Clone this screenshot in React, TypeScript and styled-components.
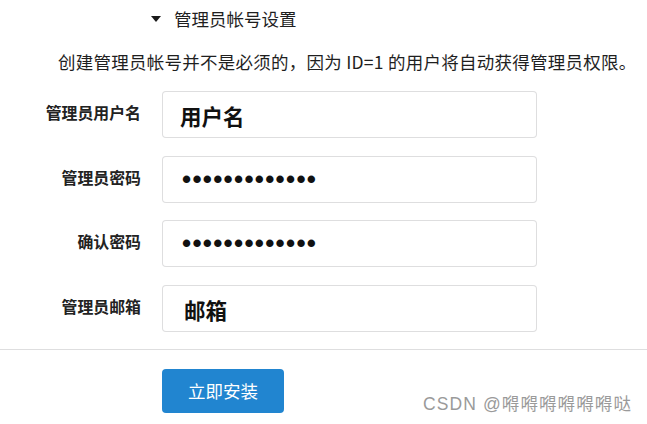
import React from "react";
import styled, { createGlobalStyle } from "styled-components";

const Global = createGlobalStyle`
  html, body {
    margin: 0;
    padding: 0;
    background: #ffffff;
  }
  body {
    font-family: "Noto Sans CJK SC", "Noto Sans", sans-serif;
    color: rgba(0, 0, 0, 0.87);
  }
`;

const Page = styled.div`
  position: relative;
  width: 647px;
  height: 424px;
  overflow: hidden;
  display: flex;
  flex-direction: column;
`;

const Header = styled.div`
  height: 36px;
  display: flex;
  align-items: center;
  padding-left: 151px;
  gap: 13px;
  font-size: 17.5px;
  color: #1f1f1f;
`;

const Caret = styled.span`
  width: 0;
  height: 0;
  border-left: 5px solid transparent;
  border-right: 5px solid transparent;
  border-top: 6px solid #1a1a1a;
  margin-top: 1px;
`;

const Description = styled.p`
  margin: 14px 0 0 58px;
  font-size: 17.5px;
  letter-spacing: 0.25px;
  line-height: 24px;
  color: #1f1f1f;
  white-space: nowrap;
`;

const Form = styled.div`
  margin-top: 17px;
  display: grid;
  grid-template-columns: 141px 375px;
  column-gap: 21px;
  row-gap: 17.67px;
`;

const Label = styled.label`
  display: flex;
  align-items: center;
  justify-content: flex-end;
  padding-bottom: 4px;
  font-size: 15.9px;
  font-weight: 700;
  color: #222;
  white-space: nowrap;
`;

const Field = styled.input<{ $secret?: boolean; $indent?: number }>`
  box-sizing: border-box;
  width: 375px;
  height: 47px;
  margin: 0;
  border: 1px solid rgba(34, 36, 38, 0.15);
  border-radius: 4px;
  padding: ${(p) => (p.$secret ? "0 0 0 19px" : `2px 0 0 ${p.$indent ?? 17}px`)};
  background: #fff;
  outline: none;
  font-family: ${(p) => (p.$secret ? '"Liberation Sans", sans-serif' : '"Noto Sans CJK SC", sans-serif')};
  font-size: ${(p) => (p.$secret ? "26px" : "21.5px")};
  font-weight: 700;
  letter-spacing: ${(p) => (p.$secret ? "1.3px" : "0")};
  color: #111;
`;

const Divider = styled.hr`
  margin: 17px 0 0 0;
  border: none;
  border-top: 1px solid rgba(34, 36, 38, 0.15);
  height: 0;
`;

const Footer = styled.div`
  padding: 19px 0 0 162px;
`;

const Button = styled.button`
  width: 122px;
  height: 44px;
  border: none;
  border-radius: 4px;
  background: #2185d0;
  color: #fff;
  font-family: "Noto Sans CJK SC", sans-serif;
  font-size: 17.5px;
  cursor: pointer;
  padding: 0;
`;

const Watermark = styled.div`
  position: absolute;
  right: 15px;
  bottom: 9px;
  font-family: "Liberation Sans", "Noto Sans CJK SC", sans-serif;
  font-size: 17.5px;
  letter-spacing: 1.1px;
  color: #9a9a9a;
  text-shadow: 0 0 1px #fff;
  white-space: nowrap;
`;

const DOTS = "•••••••••••••";

const rows = [
  { label: "管理员用户名", value: "用户名" },
  { label: "管理员密码", value: DOTS, secret: true },
  { label: "确认密码", value: DOTS, secret: true },
  { label: "管理员邮箱", value: "邮箱", indent: 21 },
];

export default function App() {
  return (
    <>
      <Global />
      <Page>
        <Header>
          <Caret />
          <span>管理员帐号设置</span>
        </Header>
        <Description>
          创建管理员帐号并不是必须的，因为 ID=1 的用户将自动获得管理员权限。
        </Description>
        <Form>
          {rows.map((r) => (
            <React.Fragment key={r.label}>
              <Label>{r.label}</Label>
              <Field readOnly value={r.value} $secret={r.secret} $indent={r.indent} />
            </React.Fragment>
          ))}
        </Form>
        <Divider />
        <Footer>
          <Button>立即安装</Button>
        </Footer>
        <Watermark>CSDN @嘚嘚嘚嘚嘚嘚哒</Watermark>
      </Page>
    </>
  );
}
